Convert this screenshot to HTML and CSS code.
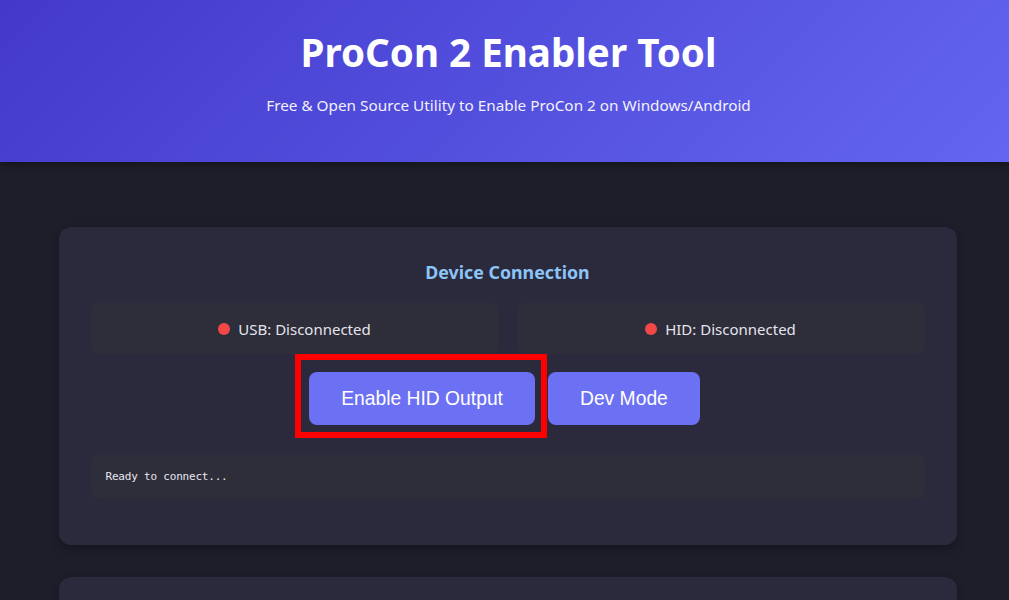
FILE: index.html
```html
<!DOCTYPE html>
<html lang="en">
<head>
    <meta charset="UTF-8">
    <meta name="viewport" content="width=device-width, initial-scale=1.0">
    <title>ProCon 2 Enabler Tool</title>
    <link rel="stylesheet" href="styles.css">
</head>
<body>
    <header class="page-header">
        <h1>ProCon 2 Enabler Tool</h1>
        <p>Free &amp; Open Source Utility to Enable ProCon 2 on Windows/Android</p>
    </header>

    <main class="container">
        <section class="card">
            <h2 class="card-title">Device Connection</h2>
            <div class="status-grid">
                <div class="status-box"><span class="dot"></span>USB: Disconnected</div>
                <div class="status-box"><span class="dot"></span>HID: Disconnected</div>
            </div>
            <div class="button-row">
                <div class="highlight">
                    <button class="btn">Enable HID Output</button>
                </div>
                <button class="btn">Dev Mode</button>
            </div>
            <div class="log" id="log">Ready to connect...</div>
        </section>

        <section class="card card-next"></section>
    </main>
</body>
</html>
```

FILE: styles.css
```css
body {
    margin: 0;
    background: #1e1e2b;
    color: #e4e4ec;
    font-family: 'Noto Sans', 'Open Sans', sans-serif;
}

.page-header {
    background: linear-gradient(135deg, #4338ca 0%, #6366f1 100%);
    color: white;
    text-align: center;
    height: 162px;
    box-sizing: border-box;
    padding-top: 28px;
    padding-left: 8px;
    box-shadow: 0 3px 8px rgba(0, 0, 0, 0.35);
}

.page-header h1 {
    margin: 0;
    font-size: 38.6px;
    line-height: 48px;
    font-weight: bold;
}

.page-header p {
    margin: 19px 0 0;
    font-size: 15.3px;
    opacity: 0.92;
}

.container {
    width: 898px;
    margin: 65px auto 0;
    padding-left: 6px;
}

.card {
    background: #2b2a3c;
    border-radius: 12px;
    padding: 32px 32px 46px;
    box-shadow: 0 4px 10px rgba(0, 0, 0, 0.3);
}

.card-title {
    margin: 0 0 18px;
    text-align: center;
    color: #8cc4f6;
    font-size: 17.8px;
    line-height: 26px;
}

.status-grid {
    display: grid;
    grid-template-columns: 1fr 1fr;
    gap: 18px;
}

.status-box {
    background: #2e2d3a;
    border-radius: 6px;
    height: 51px;
    display: flex;
    align-items: center;
    justify-content: center;
    font-size: 15px;
}

.dot {
    width: 12px;
    height: 12px;
    border-radius: 50%;
    background: #f44848;
    margin-right: 8px;
}

.button-row {
    display: flex;
    justify-content: center;
    gap: 13px;
    margin: 18px 6px 30px 0;
}

.highlight {
    position: relative;
}

.highlight::after {
    content: "";
    position: absolute;
    left: -14px;
    right: -12px;
    top: -18px;
    bottom: -13px;
    border: 6px solid #ff0000;
}

.btn {
    display: block;
    background: #6c70f3;
    color: white;
    border: none;
    border-radius: 8px;
    padding: 16px 32px;
    font-family: 'Liberation Sans', Arial, sans-serif;
    font-size: 19.3px;
    line-height: 21px;
    cursor: pointer;
}

.log {
    background: #2e2d3a;
    border-radius: 6px;
    padding: 15px;
    font-family: 'DejaVu Sans Mono', monospace;
    font-size: 11px;
    letter-spacing: -0.2px;
    line-height: 14px;
    color: #e8e8ee;
}

.card-next {
    margin-top: 32px;
    height: 200px;
    padding: 0;
}
```
